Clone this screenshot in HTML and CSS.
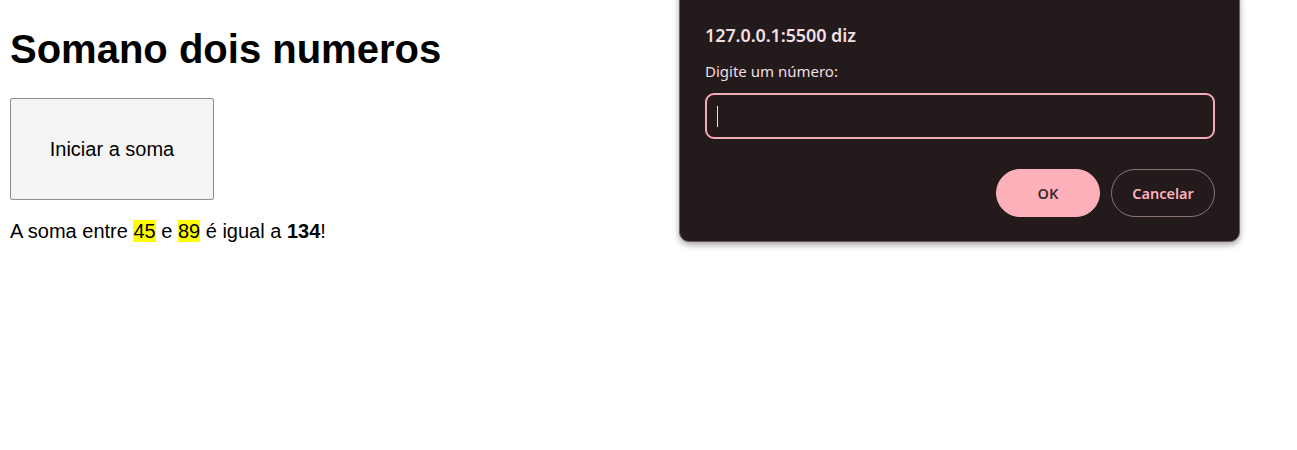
FILE: index.html
```html
<!DOCTYPE html>
<html lang="pt-BR">
<head>
<meta charset="utf-8">
<title>Somando dois numeros</title>
<link rel="stylesheet" href="styles.css">
</head>
<body>
<main class="page">
  <h1 class="title">Somano dois numeros</h1>
  <button class="start-btn" type="button">Iniciar a soma</button>
  <p class="result">A soma entre <mark class="num">45</mark> e <mark class="num">89</mark> é igual a <strong>134</strong>!</p>
</main>

<div class="dialog" role="dialog">
  <div class="dialog-title">127.0.0.1:5500 diz</div>
  <div class="dialog-label">Digite um número:</div>
  <div class="dialog-input"><span class="caret"></span></div>
  <div class="dialog-actions">
    <button class="btn-ok" type="button">OK</button>
    <button class="btn-cancel" type="button">Cancelar</button>
  </div>
</div>
</body>
</html>
```

FILE: styles.css
```css
html, body {
  margin: 0;
  padding: 0;
  background: #ffffff;
}

body {
  font-family: "Liberation Sans", Arial, sans-serif;
  font-size: 20px;
  color: #000000;
}

.page {
  padding: 10px 10px;
}

.title {
  font-size: 40px;
  font-weight: bold;
  margin: 16px 0 26px 0;
  line-height: 46px;
}

.start-btn {
  display: block;
  width: 204px;
  height: 102px;
  margin: 0;
  padding: 0;
  background: #f4f4f4;
  border: 1px solid #8f8f8f;
  border-radius: 2px;
  font-family: "Liberation Sans", Arial, sans-serif;
  font-size: 20px;
  color: #000000;
}

.result {
  margin: 20px 0;
  line-height: 23px;
}

.num {
  background: #ffff00;
  color: #000000;
}

.dialog {
  position: absolute;
  left: 679px;
  top: -12px;
  width: 561px;
  height: 254px;
  box-sizing: border-box;
  padding: 34px 24px 0 25px;
  background: #231a1c;
  border: 1px solid #6a5c5f;
  border-radius: 10px;
  box-shadow: 0 3px 6px rgba(0, 0, 0, 0.35);
  font-family: "Noto Sans", "Open Sans", sans-serif;
  color: #f1dfe1;
}

.dialog-title {
  font-size: 18px;
  font-weight: 600;
  line-height: 24px;
  letter-spacing: -0.1px;
}

.dialog-label {
  margin-top: 14px;
  font-size: 15px;
  line-height: 20px;
}

.dialog-input {
  margin-top: 12px;
  height: 46px;
  box-sizing: border-box;
  border: 2px solid #f5aab6;
  border-radius: 9px;
  display: flex;
  align-items: center;
  padding-left: 10px;
}

.caret {
  width: 1px;
  height: 21px;
  background: #f1dfe1;
}

.dialog-actions {
  margin-top: 30px;
  display: flex;
  justify-content: flex-end;
  gap: 11px;
}

.btn-ok, .btn-cancel {
  width: 104px;
  height: 48px;
  border-radius: 24px;
  font-family: "Noto Sans", "Open Sans", sans-serif;
  font-size: 14.5px;
  font-weight: 600;
  padding: 0;
  margin: 0;
}

.btn-ok {
  background: #ffb1bb;
  border: 1px solid #ffb1bb;
  color: #3a2a2d;
}

.btn-cancel {
  background: transparent;
  border: 1px solid #8b7276;
  color: #ffb1bb;
}
```
